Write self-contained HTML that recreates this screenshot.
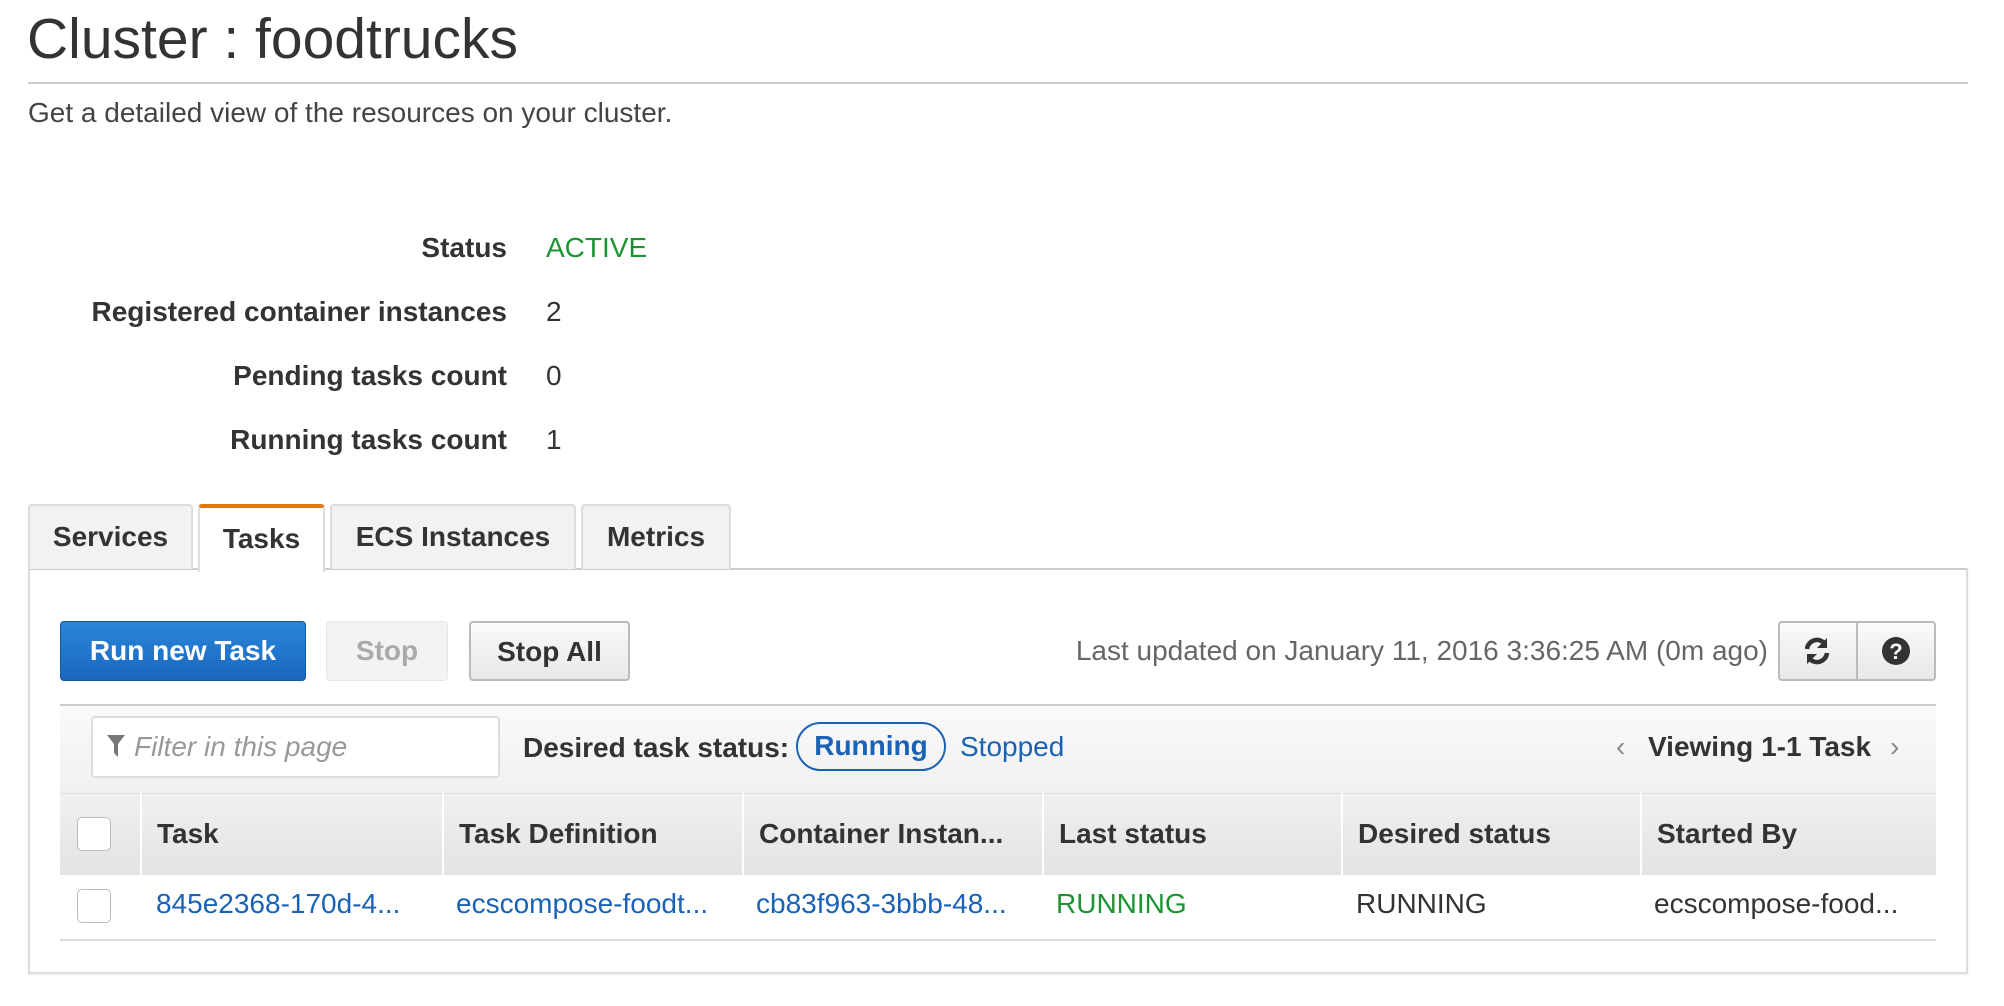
<!DOCTYPE html>
<html><head><meta charset="utf-8"><style>
*{box-sizing:border-box;margin:0;padding:0}
body{width:2004px;height:1006px;background:#fff;font-family:"Liberation Sans",Arial,sans-serif;color:#333;position:relative;overflow:hidden}
.a{position:absolute;white-space:nowrap}
h1{position:absolute;left:27px;top:6px;font-size:57px;font-weight:normal;color:#333}
.rule{position:absolute;left:28px;top:82px;width:1940px;height:2px;background:#ccc}
.sub{left:28px;top:97px;font-size:28px;color:#444}
.lbl{font-size:28px;font-weight:bold;color:#333;right:1497px;text-align:right}
.val{font-size:28px;left:546px;color:#333}
.tab{position:absolute;top:504px;height:65px;background:#f2f2f2;border:2px solid #ddd;border-bottom:none;border-radius:4px 4px 0 0;font-size:28px;font-weight:bold;color:#333;text-align:center;line-height:62px}
.panel{position:absolute;left:28px;top:568px;width:1940px;height:406px;border:2px solid #ddd;border-top:2px solid #ccc;box-shadow:0 1px 2px #eee}
.btn{position:absolute;top:621px;height:60px;border-radius:4px;font-size:28px;font-weight:bold;text-align:center;line-height:58px}
.bar{position:absolute;left:60px;top:704px;width:1876px;height:89px;border-top:2px solid #ccc;background:linear-gradient(#fafafa,#f0f0f0)}
.hdr{position:absolute;left:60px;top:793px;width:1876px;height:82px;background:linear-gradient(#f0f0f0,#e3e3e3);border-top:1px solid #ddd}
.col{position:absolute;top:793px;height:82px;border-left:2px solid #fff;font-size:28px;font-weight:bold;line-height:82px;padding-left:15px;color:#333}
.cell{position:absolute;top:888px;font-size:28px}
.cb{position:absolute;width:34px;height:34px;background:#fff;border:1px solid #bbb;border-radius:5px}
.link{color:#1a62b6}
</style></head><body>
<h1>Cluster : foodtrucks</h1>
<div class="rule"></div>
<div class="a sub">Get a detailed view of the resources on your cluster.</div>

<div class="a lbl" style="top:232px">Status</div><div class="a val" style="top:232px;color:#1d9433">ACTIVE</div>
<div class="a lbl" style="top:296px">Registered container instances</div><div class="a val" style="top:296px">2</div>
<div class="a lbl" style="top:360px">Pending tasks count</div><div class="a val" style="top:360px">0</div>
<div class="a lbl" style="top:424px">Running tasks count</div><div class="a val" style="top:424px">1</div>

<div class="panel"></div>
<div class="tab" style="left:28px;width:165px">Services</div>
<div class="tab" style="left:198px;width:127px;background:#fff;border-top:4px solid #e07a10;height:68px;line-height:62px">Tasks</div>
<div class="tab" style="left:330px;width:246px">ECS Instances</div>
<div class="tab" style="left:581px;width:150px">Metrics</div>

<div class="btn" style="left:60px;width:246px;background:linear-gradient(#2a85da,#1a68bd);border:1px solid #155a9c;color:#fff">Run new Task</div>
<div class="btn" style="left:326px;width:122px;background:#f3f3f3;border:1px solid #e6e6e6;color:#aaa">Stop</div>
<div class="btn" style="left:469px;width:161px;background:linear-gradient(#fafafa,#e8e8e8);border:2px solid #bbb;color:#333">Stop All</div>
<div class="a" style="right:236px;top:635px;font-size:28px;color:#666">Last updated on January 11, 2016 3:36:25 AM (0m ago)</div>
<div class="btn" style="left:1778px;width:158px;background:linear-gradient(#fafafa,#e8e8e8);border:2px solid #bbb"></div>
<div class="a" style="left:1856px;top:621px;width:2px;height:60px;background:#bbb"></div>
<svg class="a" style="left:1802px;top:636px" width="30" height="30" viewBox="0 0 30 30"><path d="M5 13a10 10 0 0 1 18-5" stroke="#333" stroke-width="4.5" fill="none"/><path d="M25 2v10h-10z" fill="#333"/><path d="M25 17a10 10 0 0 1-18 5" stroke="#333" stroke-width="4.5" fill="none"/><path d="M5 28v-10h10z" fill="#333"/></svg>
<svg class="a" style="left:1881px;top:636px" width="30" height="30" viewBox="0 0 30 30"><circle cx="15" cy="15" r="14" fill="#333"/><text x="15" y="23" font-family="Liberation Sans" font-weight="bold" font-size="22" fill="#fff" text-anchor="middle">?</text></svg>

<div class="bar"></div>
<div class="a" style="left:91px;top:716px;width:409px;height:62px;background:#fff;border:2px solid #ddd;border-radius:4px"></div>
<svg class="a" style="left:107px;top:735px" width="18" height="22" viewBox="0 0 18 22"><path d="M0 0h18l-7 9v13l-4-4v-9z" fill="#777"/></svg>
<div class="a" style="left:134px;top:731px;font-size:28px;font-style:italic;color:#999">Filter in this page</div>
<div class="a" style="left:523px;top:732px;font-size:28px;font-weight:bold;color:#333">Desired task status:</div>
<div class="a" style="left:796px;top:722px;width:150px;height:49px;border:2px solid #1a62b6;border-radius:25px;font-size:28px;font-weight:bold;color:#1a62b6;text-align:center;line-height:44px">Running</div>
<div class="a link" style="left:960px;top:731px;font-size:28px">Stopped</div>
<div class="a" style="left:1616px;top:731px;font-size:28px;color:#888">‹</div>
<div class="a" style="left:1648px;top:731px;font-size:28px;font-weight:bold;color:#333">Viewing 1-1 Task</div>
<div class="a" style="left:1890px;top:731px;font-size:28px;color:#888">›</div>

<div class="hdr"></div>
<div class="col" style="left:140px">Task</div>
<div class="col" style="left:442px">Task Definition</div>
<div class="col" style="left:742px">Container Instan...</div>
<div class="col" style="left:1042px">Last status</div>
<div class="col" style="left:1341px">Desired status</div>
<div class="col" style="left:1640px">Started By</div>
<div class="cb" style="left:77px;top:817px"></div>
<div class="cb" style="left:77px;top:889px"></div>
<div class="a" style="left:60px;top:939px;width:1876px;height:2px;background:#ddd"></div>
<div class="cell link" style="left:156px">845e2368-170d-4...</div>
<div class="cell link" style="left:456px">ecscompose-foodt...</div>
<div class="cell link" style="left:756px">cb83f963-3bbb-48...</div>
<div class="cell" style="left:1056px;color:#1d9433">RUNNING</div>
<div class="cell" style="left:1356px">RUNNING</div>
<div class="cell" style="left:1654px">ecscompose-food...</div>
</body></html>
